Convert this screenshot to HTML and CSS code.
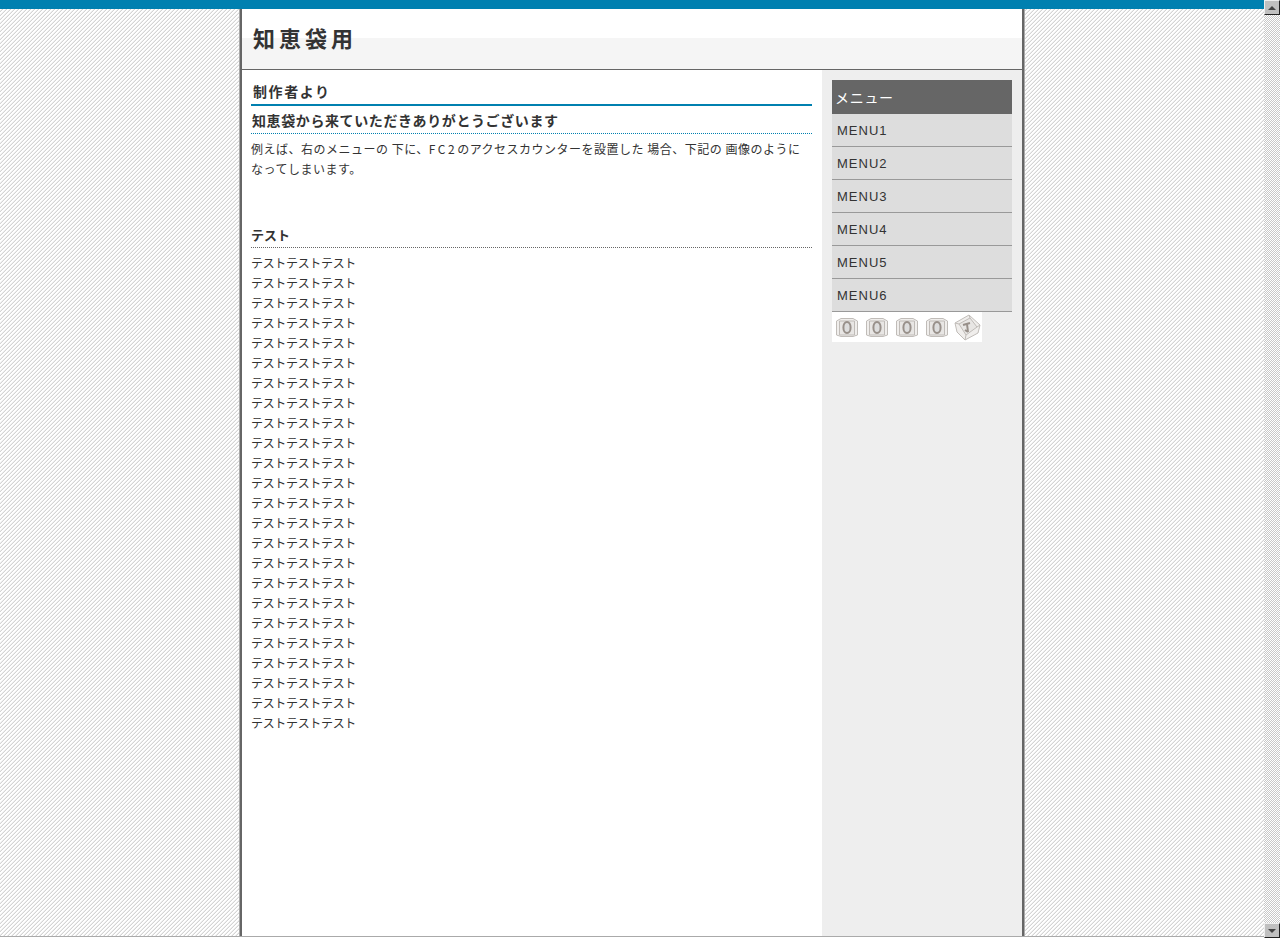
FILE: index.html
```html
<!DOCTYPE html>
<html lang="ja">
<head>
<meta charset="utf-8">
<title>知恵袋用</title>
<link rel="stylesheet" href="styles.css">
</head>
<body>
<div class="viewport">
  <div class="page">
    <div class="topbar"></div>
    <div class="wrapper">
      <header class="site-header"><h1 class="site-title">知恵袋用</h1></header>
      <div class="columns">
        <main class="main">
          <h2 class="page-heading">制作者より</h2>
          <section class="entry">
            <h3 class="entry-title">知恵袋から来ていただきありがとうございます</h3>
            <p class="entry-text entry-lead">例えば、右のメニューの 下に、<span class="latin">FC2</span>のアクセスカウンターを設置した 場合、下記の 画像のように<br>なってしまいます。</p>
          </section>
          <section class="entry entry-second">
            <h3 class="entry-title">テスト</h3>
            <div class="entry-text">
              <div>テストテストテスト</div><div>テストテストテスト</div><div>テストテストテスト</div><div>テストテストテスト</div><div>テストテストテスト</div>
              <div>テストテストテスト</div><div>テストテストテスト</div><div>テストテストテスト</div><div>テストテストテスト</div><div>テストテストテスト</div>
              <div>テストテストテスト</div><div>テストテストテスト</div><div>テストテストテスト</div><div>テストテストテスト</div><div>テストテストテスト</div>
              <div>テストテストテスト</div><div>テストテストテスト</div><div>テストテストテスト</div><div>テストテストテスト</div><div>テストテストテスト</div>
              <div>テストテストテスト</div><div>テストテストテスト</div><div>テストテストテスト</div><div>テストテストテスト</div>
            </div>
          </section>
        </main>
        <aside class="side">
          <div class="menu-title">メニュー</div>
          <ul class="menu">
            <li>MENU1</li><li>MENU2</li><li>MENU3</li><li>MENU4</li><li>MENU5</li><li>MENU6</li>
          </ul>
          <div class="counter">
            <svg class="digit" width="30" height="30" viewBox="0 0 30 30"><path d="M4.5 9 L9 6.5 H21 L25.5 9 V23 L21 24.5 H9 L4.5 23 Z" class="box"/><path d="M7.5 9 H22.5 V23 H7.5 Z" class="edge"/><ellipse cx="15" cy="15.5" rx="3.6" ry="5.6" class="zero"/></svg>
            <svg class="digit" width="30" height="30" viewBox="0 0 30 30"><path d="M4.5 9 L9 6.5 H21 L25.5 9 V23 L21 24.5 H9 L4.5 23 Z" class="box"/><path d="M7.5 9 H22.5 V23 H7.5 Z" class="edge"/><ellipse cx="15" cy="15.5" rx="3.6" ry="5.6" class="zero"/></svg>
            <svg class="digit" width="30" height="30" viewBox="0 0 30 30"><path d="M4.5 9 L9 6.5 H21 L25.5 9 V23 L21 24.5 H9 L4.5 23 Z" class="box"/><path d="M7.5 9 H22.5 V23 H7.5 Z" class="edge"/><ellipse cx="15" cy="15.5" rx="3.6" ry="5.6" class="zero"/></svg>
            <svg class="digit" width="30" height="30" viewBox="0 0 30 30"><path d="M4.5 9 L9 6.5 H21 L25.5 9 V23 L21 24.5 H9 L4.5 23 Z" class="box"/><path d="M7.5 9 H22.5 V23 H7.5 Z" class="edge"/><ellipse cx="15" cy="15.5" rx="3.6" ry="5.6" class="zero"/></svg>
            <svg class="digit" width="30" height="30" viewBox="0 0 30 30"><path d="M3 11 L17 3 L28 13 L26 21 L13 28 L5 20 Z" class="box"/><path d="M7 12 L18 6 L25 15 L14 23 Z M3 11 L7 12 M17 3 L18 6 M28 13 L25 15 M13 28 L14 23" class="edge"/><path d="M11 13 L18 11 M15 12 L16 20 M13 18 L16 20" class="one"/></svg>
          </div>
        </aside>
      </div>
    </div>
  </div>
  <div class="scrollbar">
    <div class="scroll-btn"><span class="arrow-up"></span></div>
    <div class="scroll-track"></div>
    <div class="scroll-btn"><span class="arrow-down"></span></div>
  </div>
</div>
</body>
</html>
```
FILE: styles.css
```css
* { box-sizing: border-box; }
html, body { margin: 0; padding: 0; height: 100%; overflow: hidden; }
body {
  font-family: "Noto Sans CJK JP", "Liberation Sans", sans-serif;
  color: #333;
  font-size: 12px;
}
.viewport { display: flex; height: 938px; width: 1280px; }
.page {
  flex: 1;
  display: flex;
  flex-direction: column;
  align-items: center;
  min-width: 0;
  height: 937px;
  background-color: #fff;
  background-image: url("data:image/svg+xml,%3Csvg xmlns='http://www.w3.org/2000/svg' width='4' height='4' shape-rendering='crispEdges'%3E%3Cpath fill='%23d4d4d4' d='M3 0h1v1h-1zM2 1h1v1h-1zM1 2h1v1h-1zM0 3h1v1h-1z'/%3E%3Cpath fill='%23eee' d='M2 0h1v1h-1zM1 1h1v1h-1zM0 2h1v1h-1zM3 3h1v1h-1z'/%3E%3C/svg%3E");
  border-bottom: 1px solid #aaa;
}
.topbar { width: 100%; height: 9px; background: #0080b0; flex: none; }
.wrapper {
  width: 784px;
  flex: 1;
  background: #fff;
  border-left: 2px solid #666;
  border-right: 2px solid #666;
  display: flex;
  flex-direction: column;
  box-shadow: -1px 0 0 #aaa, 1px 0 0 #aaa;
}
.site-header {
  height: 61px;
  flex: none;
  border-bottom: 1px solid #666;
  background: linear-gradient(#fff 0, #fff 29px, #f5f5f5 29px);
  padding: 12px 0 0 11px;
}
.site-title {
  margin: 0;
  font-size: 22px;
  line-height: 32px;
  letter-spacing: 4px;
  font-weight: 700;
  color: #333;
}
.columns { flex: 1; display: flex; min-height: 0; }
.main { width: 580px; flex: none; padding: 11px 10px 0 9px; }
.page-heading {
  margin: 0;
  height: 25px;
  padding-left: 2px;
  font-size: 14px;
  line-height: 20px;
  letter-spacing: 1.6px;
  font-weight: 700;
  color: #333;
  border-bottom: 2px solid #0080b0;
}
.entry-title {
  margin: 0;
  padding: 4px 0 0 1px;
  height: 28px;
  font-size: 14px;
  line-height: 20px;
  letter-spacing: 0.6px;
  font-weight: 700;
  color: #333;
  border-bottom: 1px dotted #0080b0;
}
.entry-text { margin: 0; padding-top: 5px; font-size: 12px; line-height: 20px; letter-spacing: -0.33px; color: #333; }
.entry-lead { letter-spacing: 0.5px; }
.latin { letter-spacing: 2.5px; }
.entry-second { margin-top: 41px; }
.entry-second .entry-title { padding: 5px 0 0; border-bottom: 1px dotted #666; font-size: 13px; letter-spacing: 0; }
.side { width: 200px; flex: none; background: #eee; padding: 10px 10px 0; }
.menu-title {
  height: 34px;
  background: #666;
  color: #fff;
  font-size: 14px;
  line-height: 34px;
  padding-left: 3px;
  letter-spacing: 0.7px;
}
.menu { list-style: none; margin: 0; padding: 0; }
.menu li {
  height: 33px;
  background: #ddd;
  border-bottom: 1px solid #999;
  font-family: "Liberation Sans", sans-serif;
  font-size: 13px;
  line-height: 33px;
  letter-spacing: 1px;
  padding-left: 5px;
  color: #333;
}
.counter { width: 150px; height: 30px; background: #fff; display: flex; }
.digit { display: block; filter: blur(0.7px); }
.box { fill: #f0eeec; stroke: #c0bcb8; stroke-width: 1; }
.edge { fill: #e8e6e4; stroke: #c0bcb8; stroke-width: 1; }
.zero { fill: #ddd; stroke: #98908a; stroke-width: 2; }
.one { fill: none; stroke: #98908a; stroke-width: 2; }
.scrollbar {
  width: 16px;
  flex: none;
  display: flex;
  flex-direction: column;
  background-color: #fff;
  background-image: conic-gradient(#c8c8c8 25%, #fff 0 50%, #c8c8c8 0 75%, #fff 0);
  background-size: 2px 2px;
}
.scroll-track { flex: 1; }
.scroll-btn {
  height: 15px;
  flex: none;
  background: #c0c0c0;
  border-top: 1px solid #eee;
  border-left: 1px solid #eee;
  border-right: 1px solid #222;
  border-bottom: 1px solid #222;
  display: flex;
  align-items: center;
  justify-content: center;
}
.arrow-up { width: 0; height: 0; border-left: 4px solid transparent; border-right: 4px solid transparent; border-bottom: 4px solid #444; }
.arrow-down { width: 0; height: 0; border-left: 4px solid transparent; border-right: 4px solid transparent; border-top: 4px solid #444; }
```
